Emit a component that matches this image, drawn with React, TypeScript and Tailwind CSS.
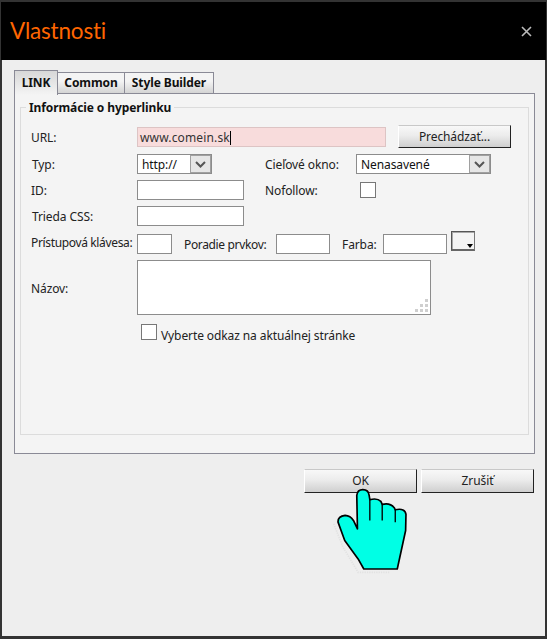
import React from 'react';

const inputCls = 'h-[20px] bg-white border border-[#8c8c8c] box-border shrink-0';
const labelCls = 'w-[106px] shrink-0 pt-[2px]';

const Chevron = () => (
  <svg width="11" height="7" viewBox="0 0 11 7" className="block">
    <path d="M1 1 L5.5 5.5 L10 1" fill="none" stroke="#555" strokeWidth="2" />
  </svg>
);

const SelectBox: React.FC<{ value: string; className: string }> = ({ value, className }) => (
  <div className={`h-[20px] flex bg-white border border-[#8c8c8c] box-border shrink-0 ${className}`}>
    <span className="flex-1 pl-[4px] leading-[20px] text-[#111]">{value}</span>
    <span className="w-[21px] bg-[#e6e6e6] border border-[#a0a0a0] flex items-center justify-center">
      <Chevron />
    </span>
  </div>
);

const GrayButton: React.FC<{ label: string; className: string }> = ({ label, className }) => (
  <button className={`shrink-0 box-border border-t border-l border-t-[#c8c8c8] border-l-white border-r border-b border-r-[#222] border-b-[#222] bg-gradient-to-b from-[#f8f8f8] via-[#ececec] via-45% to-[#cfcfcf] text-[#222] ${className}`}>
    {label}
  </button>
);

const Check = () => <div className="w-[16px] h-[16px] bg-white border border-[#777] box-border shrink-0" />;

const Grip = () => (
  <svg width="15" height="15" viewBox="0 0 15 15" className="absolute right-[1px] bottom-[1px]">
    <g fill="#cfcfcf">
      <rect x="11" y="1" width="3" height="3" />
      <rect x="6" y="6" width="3" height="3" />
      <rect x="11" y="6" width="3" height="3" />
      <rect x="1" y="11" width="3" height="3" />
      <rect x="6" y="11" width="3" height="3" />
      <rect x="11" y="11" width="3" height="3" />
    </g>
  </svg>
);

const Hand = () => (
  <svg width="77" height="87" viewBox="130 140 230 260" className="absolute left-[333px] top-[487px]">
    <path d="M132 250 L160 320 L205 395 L300 395" fill="none" stroke="#e2e2e2" strokeWidth="5" strokeDasharray="4 3" />
    <path
      d="M201 165 Q203 148 219 148 Q236 148 238 165 L240 178 Q262 172 273 183 L277 192 Q300 186 313 202 L316 208 Q346 202 348 222 L347 270 L322 385 L222 385 L205 355 L165 300 L145 245 Q144 228 166 225 Q182 226 191 240 L203 265 Z"
      fill="#00ffe5"
      stroke="#000"
      strokeWidth="5"
      strokeLinejoin="round"
    />
    <path d="M240 178 L240 240 M277 192 L277 240 M316 208 L316 245" fill="none" stroke="#000" strokeWidth="4" />
  </svg>
);

export default function App() {
  return (
    <div className="relative w-[547px] h-[639px] overflow-hidden bg-[#333] pt-[2px] text-[12px] tracking-[-0.1px] text-[#222] font-['Noto_Sans',sans-serif]">
      {/* header */}
      <div className="h-[58px] bg-black flex items-center justify-between pl-[8px] pr-[13px] mx-[1px] border-l border-r border-black">
        <h1 className="text-[#ff6600] text-[22.5px] tracking-[-0.2px] font-['Lato',sans-serif] font-normal leading-none">Vlastnosti</h1>
        <svg width="11" height="11" viewBox="0 0 11 11">
          <path d="M1 1 L10 10 M10 1 L1 10" stroke="#bbb" strokeWidth="1.6" />
        </svg>
      </div>

      {/* body */}
      <div className="h-[576px] mx-[2px] bg-[#eeeeee] px-[12px] pt-[10px]">
        {/* tabs */}
        <div className="relative z-10 flex items-end h-[24px] font-bold text-[#111]">
          <div className="w-[44px] h-[25px] -mb-[1px] bg-gradient-to-b from-[#d8d8d8] to-[#f4f4f4] border border-b-0 border-[#8a8a96] flex items-center justify-center">LINK</div>
          <div className="w-[67px] h-[22px] bg-gradient-to-b from-[#f4f4f4] from-40% to-[#d4d4d4] border border-l-0 border-[#8a8a96] flex items-center justify-center">Common</div>
          <div className="w-[89px] h-[22px] bg-gradient-to-b from-[#f4f4f4] from-40% to-[#d4d4d4] border border-l-0 border-[#8a8a96] flex items-center justify-center">Style Builder</div>
        </div>

        {/* panel */}
        <div className="w-[521px] h-[361px] bg-[#f4f4f4] border border-[#8a8a96] -mt-[1px] px-[5px] pt-[5px] box-border">
          <fieldset className="relative w-[509px] h-[336px] border border-[#dcdcdc] pl-[10px] box-border">
            <legend className="font-bold text-[#111] px-[3px] -ml-[5px] pt-[2px] leading-[14px]">Informácie o hyperlinku</legend>

            <div className="flex items-center h-[23px] mt-[10px]">
              <span className={labelCls}>URL:</span>
              <div className="w-[249px] h-[20px] bg-[#f8dcdc] border border-[#ddc4c4] box-border shrink-0 pl-[2px] leading-[20px] text-[#333] tracking-[0.15px]">
                www.comein.sk<span className="inline-block w-[1px] h-[14px] bg-black align-middle" />
              </div>
              <GrayButton label="Prechádzať..." className="w-[113px] h-[23px] ml-[12px]" />
            </div>

            <div className="flex items-center h-[20px] mt-[6px]">
              <span className={`${labelCls} pl-[1px]`}>Typ:</span>
              <SelectBox value="http://" className="w-[75px]" />
              <span className="w-[91px] ml-[53px] shrink-0 pt-[2px]">Cieľové okno:</span>
              <SelectBox value="Nenasavené" className="w-[135px]" />
            </div>

            <div className="flex items-center h-[20px] mt-[6px]">
              <span className={labelCls}>ID:</span>
              <div className={`${inputCls} w-[107px]`} />
              <span className="w-[95px] ml-[21px] shrink-0 pt-[2px]">Nofollow:</span>
              <Check />
            </div>

            <div className="flex items-center h-[20px] mt-[6px]">
              <span className={`${labelCls} pl-[1px]`}>Trieda CSS:</span>
              <div className={`${inputCls} w-[107px]`} />
            </div>

            <div className="flex items-center h-[20px] mt-[8px]">
              <span className="w-[106px] shrink-0 whitespace-nowrap -mt-[2px] tracking-[-0.35px]">Prístupová klávesa:</span>
              <div className={`${inputCls} w-[35px]`} />
              <span className="w-[104px] pl-[12px] pt-[2px] shrink-0 whitespace-nowrap tracking-[-0.35px]">Poradie prvkov:</span>
              <div className={`${inputCls} w-[54px]`} />
              <span className="w-[53px] pl-[12px] pt-[2px] shrink-0">Farba:</span>
              <div className={`${inputCls} w-[64px]`} />
              <div className="relative w-[24px] h-[20px] ml-[4px] -mt-[6px] bg-[#f4f4f4] border-t border-l border-t-[#555] border-l-[#555] border-r border-b-2 border-r-[#777] border-b-[#666] box-border shadow-[inset_1px_1px_0_#a8a8a8]">
                <span className="absolute right-[1px] bottom-[1px] w-0 h-0 border-l-[3px] border-r-[3px] border-t-[4px] border-l-transparent border-r-transparent border-t-black" />
              </div>
            </div>

            <div className="flex items-center h-[55px] mt-[6px]">
              <span className={labelCls}>Názov:</span>
              <div className="relative w-[294px] h-[55px] bg-white border border-[#8c8c8c] box-border shrink-0">
                <Grip />
              </div>
            </div>

            <div className="flex items-center h-[16px] mt-[9px] pl-[110px] gap-[4px]">
              <Check />
              <span className="whitespace-nowrap pt-[7px]">Vyberte odkaz na aktuálnej stránke</span>
            </div>
          </fieldset>
        </div>

        {/* footer buttons */}
        <div className="w-[520px] flex justify-end gap-[4px] mt-[15px]">
          <GrayButton label="OK" className="w-[113px] h-[24px]" />
          <GrayButton label="Zrušiť" className="w-[113px] h-[24px]" />
        </div>
      </div>

      <Hand />
    </div>
  );
}
